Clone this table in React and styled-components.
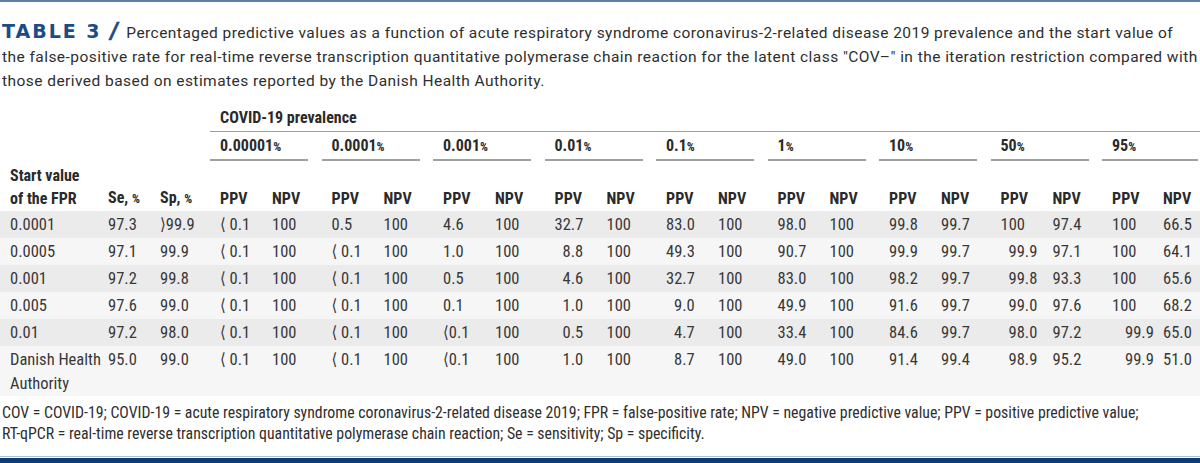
import React from "react";
import styled, { createGlobalStyle } from "styled-components";

const GlobalStyle = createGlobalStyle`
  html, body {
    margin: 0;
    padding: 0;
    background: #ffffff;
  }
  body {
    width: 1200px;
    height: 463px;
    overflow: hidden;
  }
`;

// whole figure
const Figure = styled.div`
  display: flex;
  flex-direction: column;
  width: 1200px;
  height: 463px;
  border-top: 2px solid #5b7fa6;
  box-sizing: border-box;
`;

// caption with the TABLE 3 label
const Caption = styled.p`
  margin: 18px 0 0 0;
  padding-left: 2px;
  height: 70px;
  font-family: Roboto, "Liberation Sans", sans-serif;
  font-size: 15.5px;
  letter-spacing: 0.45px;
  line-height: 24px;
  color: #2e2e2e;
  white-space: nowrap;
`;

const TableLabel = styled.span`
  font-family: "DejaVu Sans", "Liberation Sans", sans-serif;
  font-weight: 700;
  font-size: 19px;
  line-height: 1;
  letter-spacing: 2px;
  color: #1c4c86;
`;

const Slash = styled.span`
  display: inline-block;
  font-size: 22px;
  letter-spacing: 0;
  margin-right: 8px;
  transform: skewX(-8deg);
  -webkit-text-stroke: 0.6px #1c4c86;
`;

const Table = styled.table`
  width: 1200px;
  border-collapse: separate;
  border-spacing: 0;
  table-layout: fixed;
  font-family: "Roboto Condensed", Roboto, "DejaVu Sans Condensed", sans-serif;
  color: #383838;
`;

const HeadCell = styled.th`
  padding: 0 0 0 10px;
  text-align: left;
  font-weight: 700;
  font-size: 16px;
  color: #2a2a2a;
  white-space: nowrap;
`;

const PrevalenceCell = styled(HeadCell)`
  height: 42px;
  vertical-align: bottom;
  line-height: 20px;
  padding-bottom: 3px;
  border-bottom: 1px solid #9d9d9d;
  box-sizing: border-box;
`;

const GroupCell = styled.th`
  padding: 0;
  vertical-align: top;
`;

const GroupLabel = styled.div`
  width: ${(p) => p.$w}px;
  padding: 4px 0 2px 10px;
  box-sizing: border-box;
  text-align: left;
  font-size: 16px;
  line-height: 20px;
  font-weight: 700;
  color: #2a2a2a;
  border-bottom: 2px solid #a0a0a0;
`;

const Pct = styled.span`
  font-size: 12.5px;
`;

const ColHead = styled(HeadCell)`
  height: 50px;
  vertical-align: bottom;
  line-height: 23px;
  padding-bottom: 1px;
  box-sizing: border-box;
`;

const Row = styled.tr`
  background: ${(p) => (p.$odd ? "#ebebeb" : "#f6f6f6")};
`;

const Cell = styled.td`
  padding: ${(p) => (p.$tall ? "2px 0 0" : "0")} ${(p) => 10 + (p.$indent || 0)}px;
  padding-right: 0;
  height: ${(p) => (p.$tall ? 49 : 27)}px;
  box-sizing: border-box;
  vertical-align: top;
  font-size: 16.5px;
  line-height: ${(p) => (p.$tall ? 24 : 27)}px;
  white-space: pre;
`;

const Notes = styled.p`
  margin: 6px 0 0 0;
  padding-left: 2px;
  font-family: "Roboto Condensed", Roboto, "DejaVu Sans Condensed", sans-serif;
  font-size: 15.8px;
  line-height: 21px;
  color: #2e2e2e;
  white-space: nowrap;
`;

const BottomRule = styled.div`
  margin-top: auto;
  height: 7px;
  border-top: 1px solid #a9c0da;
  box-sizing: border-box;
  background: linear-gradient(#ffffff 0 1px, #0e3b74 1px);
`;

const groups = ["0.00001", "0.0001", "0.001", "0.01", "0.1", "1", "10", "50", "95"];

// first column widths then PPV / NPV pairs
const colWidths = [98, 52, 60];
groups.forEach((g, i) => {
  if (i === groups.length - 1) colWidths.push(51, 47);
  else colWidths.push(52, 59.5);
});

// a trailing * pushes the value right by one figure, ** by a bit more
const rows = [
  ["0.0001", "97.3", "⟩99.9", "⟨ 0.1", "100", "0.5", "100", "4.6", "100", "32.7", "100", "83.0", "100", "98.0", "100", "99.8", "99.7", "100", "97.4", "100", "66.5"],
  ["0.0005", "97.1", "99.9", "⟨ 0.1", "100", "⟨ 0.1", "100", "1.0", "100", "8.8*", "100", "49.3", "100", "90.7", "100", "99.9", "99.7", "99.9*", "97.1", "100", "64.1"],
  ["0.001", "97.2", "99.8", "⟨ 0.1", "100", "⟨ 0.1", "100", "0.5", "100", "4.6*", "100", "32.7", "100", "83.0", "100", "98.2", "99.7", "99.8*", "93.3", "100", "65.6"],
  ["0.005", "97.6", "99.0", "⟨ 0.1", "100", "⟨ 0.1", "100", "0.1", "100", "1.0*", "100", "9.0*", "100", "49.9", "100", "91.6", "99.7", "99.0*", "97.6", "100", "68.2"],
  ["0.01", "97.2", "98.0", "⟨ 0.1", "100", "⟨ 0.1", "100", "⟨0.1", "100", "0.5*", "100", "4.7*", "100", "33.4", "100", "84.6", "99.7", "98.0*", "97.2", "99.9**", "65.0"],
  ["Danish Health\nAuthority", "95.0", "99.0", "⟨ 0.1", "100", "⟨ 0.1", "100", "⟨0.1", "100", "1.0*", "100", "8.7*", "100", "49.0", "100", "91.4", "99.4", "98.9*", "95.2", "99.9**", "51.0"],
];

function parse(v) {
  const m = v.match(/^(.*?)(\*+)$/);
  if (!m) return { text: v, indent: 0 };
  return { text: m[1], indent: m[2].length === 1 ? 8 : 13 };
}

function App() {
  return (
    <Figure>
      <GlobalStyle />
      <Caption>
        <TableLabel>
          TABLE 3 <Slash>/</Slash>
        </TableLabel>
        Percentaged predictive values as a function of acute respiratory syndrome coronavirus-2-related disease 2019 prevalence and the start value of
        <br />
        the false-positive rate for real-time reverse transcription quantitative polymerase chain reaction for the latent class "COV–" in the iteration restriction compared with
        <br />
        those derived based on estimates reported by the Danish Health Authority.
      </Caption>

      <Table>
        <colgroup>
          {colWidths.map((w, i) => (
            <col key={i} style={{ width: w }} />
          ))}
        </colgroup>
        <thead>
          <tr>
            <th colSpan={3} />
            <PrevalenceCell colSpan={18}>COVID-19 prevalence</PrevalenceCell>
          </tr>
          <tr>
            <th colSpan={3} />
            {groups.map((g, i) => (
              <GroupCell key={g} colSpan={2}>
                <GroupLabel $w={i === groups.length - 1 ? 96 : 98}>
                  {g}
                  <Pct>%</Pct>
                </GroupLabel>
              </GroupCell>
            ))}
          </tr>
          <tr>
            <ColHead>
              Start value
              <br />
              of the FPR
            </ColHead>
            <ColHead>
              Se, <Pct>%</Pct>
            </ColHead>
            <ColHead>
              Sp, <Pct>%</Pct>
            </ColHead>
            {groups.map((g) => (
              <React.Fragment key={g}>
                <ColHead>PPV</ColHead>
                <ColHead>NPV</ColHead>
              </React.Fragment>
            ))}
          </tr>
        </thead>
        <tbody>
          {rows.map((r, ri) => (
            <Row key={ri} $odd={ri % 2 === 0}>
              {r.map((v, ci) => {
                const { text, indent } = parse(v);
                return (
                  <Cell key={ci} $indent={indent} $tall={ri === rows.length - 1}>
                    {text}
                  </Cell>
                );
              })}
            </Row>
          ))}
        </tbody>
      </Table>

      <Notes>
        COV = COVID-19; COVID-19 = acute respiratory syndrome coronavirus-2-related disease 2019; FPR = false-positive rate; NPV = negative predictive value; PPV = positive predictive value;
        <br />
        RT-qPCR = real-time reverse transcription quantitative polymerase chain reaction; Se = sensitivity; Sp = specificity.
      </Notes>

      <BottomRule />
    </Figure>
  );
}

export default App;
